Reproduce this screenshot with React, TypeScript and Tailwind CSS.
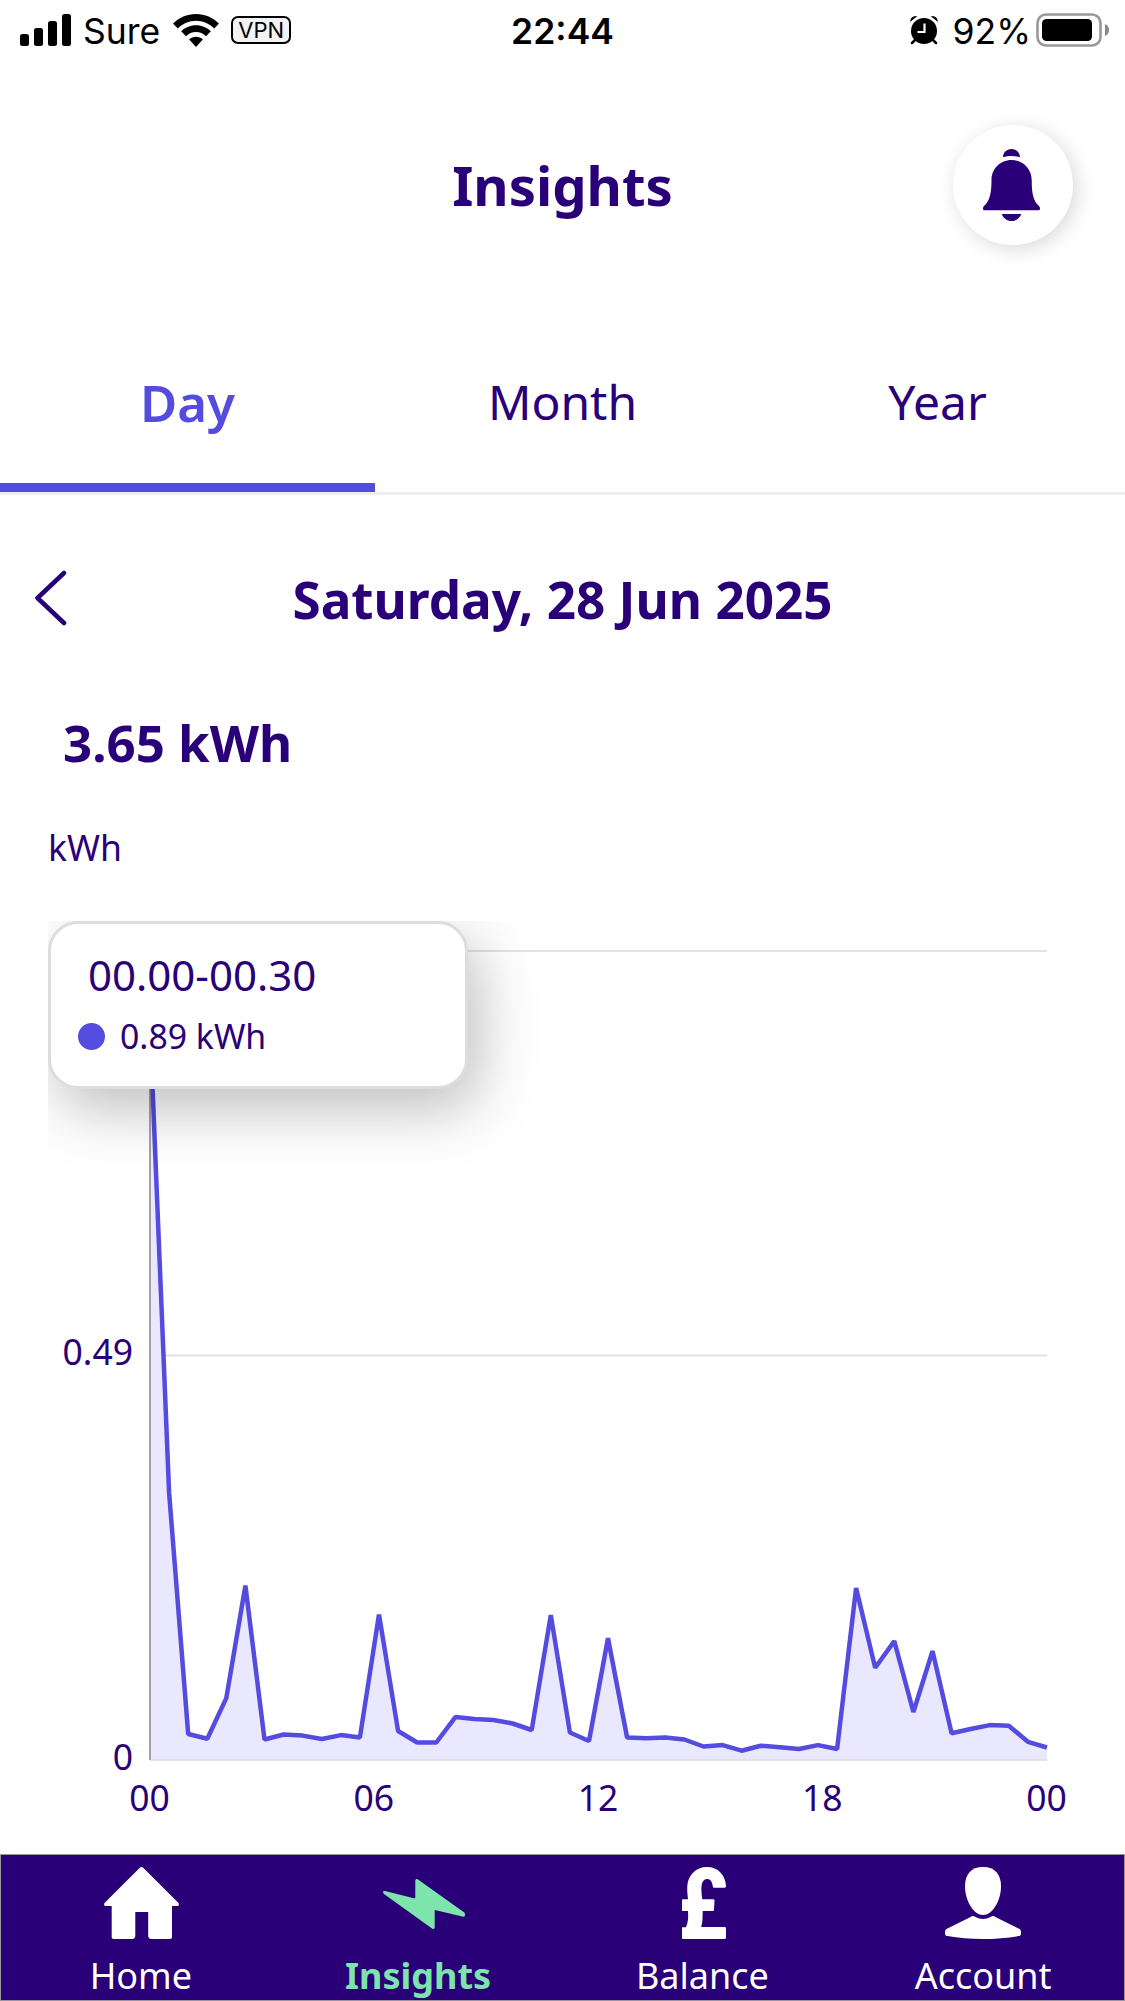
import React, { useState } from "react";

type Tab = "Day" | "Month" | "Year";

type NavItem = {
  label: string;
  icon: React.ReactNode;
  active?: boolean;
};

const TABS: Tab[] = ["Day", "Month", "Year"];

// half-hourly usage in kWh
const READINGS = [
  0.89, 0.3238, 0.0315, 0.0258, 0.075, 0.2113, 0.0248, 0.0309, 0.0296, 0.0254,
  0.0302, 0.0272, 0.1762, 0.0351, 0.0212, 0.0212, 0.052, 0.0496, 0.0484, 0.0442,
  0.0363, 0.1756, 0.0333, 0.023, 0.1476, 0.0272, 0.0263, 0.0272, 0.0248, 0.0163,
  0.0181, 0.0113, 0.0173, 0.0154, 0.0133, 0.0181, 0.0133, 0.2083, 0.1118, 0.144,
  0.0581, 0.1319, 0.0323, 0.0375, 0.0423, 0.0415, 0.0221, 0.0151,
];

const CHART = { left: 102, right: 999, top: 30, bottom: 839, max: 0.98 };

const X_LABELS = ["00", "06", "12", "18", "00"];

function StatusBar() {
  return (
    <div className="grid h-[60px] grid-cols-3 items-start font-['Inter',sans-serif] text-black">
      <div className="flex h-[60px] items-center pl-5">
        <svg width="51" height="32" viewBox="0 0 51 32" className="block">
          <rect x="0" y="20" width="9" height="12" rx="2.5" />
          <rect x="14" y="14" width="9" height="18" rx="2.5" />
          <rect x="28" y="7" width="9" height="25" rx="2.5" />
          <rect x="42" y="0" width="9" height="32" rx="2.5" />
        </svg>
        <span className="ml-3 pt-[3px] text-[35.5px] leading-[60px]">Sure</span>
        <svg
          width="46"
          height="33"
          viewBox="0 0 46 33"
          className="ml-[13px] block"
        >
          <path d="M23 0C14 0 6 3.600 0 9.600l4.800 4.800C9.600 9.600 16 6.700 23 6.700s13.400 2.900 18.200 7.700L46 9.600C40 3.600 32 0 23 0Z" />
          <path d="M23 11.200c-5.800 0-11 2.300-14.900 6.100l4.900 4.900c2.600-2.500 6.100-4.100 10-4.100s7.400 1.600 10 4.100l4.900-4.900c-3.900-3.800-9.100-6.100-14.900-6.100Z" />
          <path d="M23 22.800c-2.600 0-5 1-6.800 2.700L23 33l6.800-7.500c-1.800-1.700-4.200-2.700-6.800-2.700Z" />
        </svg>
        <span className="ml-3 flex h-7 w-[60px] items-center justify-center rounded-[7px] border-2 border-black bg-[#f3f3f3] text-[22px] leading-none">
          VPN
        </span>
      </div>
      <div className="pt-[2px] text-center text-[35.5px] font-semibold leading-[60px]">
        22:44
      </div>
      <div className="flex h-[60px] items-center justify-end pr-[15px]">
        <svg width="28" height="30" viewBox="0 0 28 30" className="block">
          <circle cx="14" cy="16" r="13" />
          <path
            d="M0 7.500C-1 3 3.500-.8 8 1.200L0 7.500ZM28 7.500c1-4.500-3.500-8.300-8-6.300L28 7.500Z"
            stroke="white"
            strokeWidth="1"
          />
          <path
            d="M5 25l-3 3M23 25l3 3"
            stroke="black"
            strokeWidth="2.500"
            strokeLinecap="round"
          />
          <path
            d="M14.500 8.500v8.500H7.500"
            fill="none"
            stroke="white"
            strokeWidth="2.200"
          />
        </svg>
        <span className="ml-[14px] pt-[3px] text-[35.5px] leading-[60px]">
          92%
        </span>
        <svg
          width="74"
          height="34"
          viewBox="0 0 74 34"
          className="ml-[5px] block"
        >
          <rect
            x="1.500"
            y="1.500"
            width="63"
            height="31"
            rx="8.500"
            fill="none"
            stroke="#999"
            strokeWidth="2.600"
          />
          <rect x="6" y="6" width="50" height="22" rx="4.500" />
          <path d="M69 11c2.500 1 4 3.200 4 6s-1.500 5-4 6V11Z" fill="#888" />
        </svg>
      </div>
    </div>
  );
}

function BellIcon() {
  return (
    <svg width="57" height="72" viewBox="0 0 57 72" fill="#290078">
      <path d="M20 8.200C20 3.600 23.700 0 28.500 0S37 3.600 37 8.200C34.500 7.500 31.500 7 28.500 7s-6 .5-8.500 1.200Z" />
      <path d="M28.500 11C17 11 8.500 20 8.500 31c0 12-1.500 21-7.500 26-1.800 1.800-1 4.300.6 4.300h53.800c1.600 0 2.400-2.500.6-4.300-6-5-7.300-14-7.300-26C48.700 20 40 11 28.500 11Z" />
      <path d="M18.700 65h19.600c-1.600 4.300-5.400 7-9.800 7s-8.200-2.700-9.800-7Z" />
    </svg>
  );
}

function HomeIcon() {
  return (
    <svg width="75" height="72" viewBox="0 0 75 72" fill="currentColor">
      <path d="M35.800.8c1-1 2.400-1 3.400 0L74 35.500c1.500 1.500 1.200 3.500-.5 3.500H68v31c0 1.300-.7 2-2 2H47.500c-2 0-3.300-1.300-3.300-3.300V45H31.300v23.700c0 2-1.300 3.300-3.300 3.300H9.700c-1.300 0-2-.7-2-2V39H1.500C-.2 39-.5 37 1 35.500L35.800.8Z" />
    </svg>
  );
}

function BoltIcon() {
  return (
    <svg
      width="82"
      height="50"
      viewBox="0 0 82 50"
      fill="currentColor"
      className="ml-[3px] mt-[2px]"
    >
      <path d="M32.300 18.500V2c0-2 1.200-2.500 2.700-1.500l46.300 33c1.200 1 .9 4.500-.8 4.200L51.700 31v17c0 2-1.200 2.500-2.700 1.400L1 15c-1.800-1.400-1-3.400 1-3l28 7c1.400.3 2.300.3 2.300-.5Z" />
    </svg>
  );
}

function PoundIcon() {
  return (
    <svg
      width="44"
      height="72"
      viewBox="0 0 44 72"
      fill="currentColor"
      className="ml-[3px]"
    >
      <path d="M25 0C36 0 43.500 8 44 19c0 1.200-.4 1.700-1.500 1.700h-10c-1 0-1.500-.5-1.700-1.500C30 14.500 28.300 12 25 12c-3.800 0-5.600 4.200-5.600 10 0 4 .5 7 .9 10.300H31c1.200 0 1.600.5 1.500 1.600l-.5 8.700c0 1-.6 1.500-1.500 1.500H20.700c-.3 6 .3 10.500-1.500 16H42.500c1 0 1.500.5 1.500 1.500v9c0 1-.5 1.400-1.500 1.400H1c-.7 0-1-.3-1-1V61.300c0-.7.300-1 1-1h3C6 56 6.500 51 6 44.100H1c-.7 0-1-.3-1-1v-9.800c0-.7.300-1 1-1h5C5.700 28 5 25 5.300 19 6 8 14 0 25 0Z" />
    </svg>
  );
}

function AccountIcon() {
  return (
    <svg
      width="76"
      height="72"
      viewBox="0 0 76 72"
      fill="currentColor"
      className="mr-[2px]"
    >
      <path d="M38 0c12 0 18 7.500 18 19 0 15.500-9 29-18 29s-18-13.500-18-29C20 7.500 26 0 38 0Z" />
      <path d="M27 49.200c2.800-1 4.500 2.800 11 2.800s8.200-3.800 11-2.800c.8.300 1.600.8 2.400 1.300L74 61.700c1.400.7 2 1.600 2 3.100v1.600c0 1.600-.8 2.400-2.500 2.700C63 71 50 72 38 72S13 71 2.500 69.100C.8 68.800 0 68 0 66.400v-1.600c0-1.500.6-2.400 2-3.100l22.600-11.200c.8-.5 1.600-1 2.400-1.300Z" />
    </svg>
  );
}

const NAV_ITEMS: NavItem[] = [
  { label: "Home", icon: <HomeIcon /> },
  { label: "Insights", icon: <BoltIcon />, active: true },
  { label: "Balance", icon: <PoundIcon /> },
  { label: "Account", icon: <AccountIcon /> },
];

function UsageChart() {
  const { left, right, top, bottom, max } = CHART;
  const step = (right - left) / (READINGS.length - 1);
  const points = READINGS.map((value, index) => {
    const x = left + index * step;
    const y = bottom - (value / max) * (bottom - top);
    return `${x.toFixed(1)},${y.toFixed(1)}`;
  });
  const middle = (top + bottom) / 2;

  return (
    <svg
      width="1077"
      height="933"
      viewBox="0 0 1077 933"
      className="block font-['Noto_Sans',sans-serif] text-[35.5px]"
      fill="#290078"
    >
      <polygon
        points={`${left},${bottom} ${points.join(" ")} ${right},${bottom}`}
        fill="#eae8fe"
      />
      <line
        x1={left + 15}
        x2={right}
        y1={middle}
        y2={middle}
        stroke="#e2e2e4"
        strokeWidth="2"
      />
      {[top, bottom].map((y) => (
        <line
          key={y}
          x1={left}
          x2={right}
          y1={y}
          y2={y}
          stroke="#e2e2e4"
          strokeWidth="2"
        />
      ))}
      <line
        x1={left}
        x2={left}
        y1={top}
        y2={bottom}
        stroke="#a3a2aa"
        strokeWidth="2"
      />
      <polyline
        points={points.join(" ")}
        fill="none"
        stroke="#544bdf"
        strokeWidth="4.500"
        strokeLinejoin="bevel"
      />
      <text x="85" y="444" textAnchor="end">
        0.49
      </text>
      <text x="85" y="849" textAnchor="end">
        0
      </text>
      {X_LABELS.map((label, index) => (
        <text
          key={index}
          x={left - 0.5 + (index * (right - left)) / 4}
          y="890"
          textAnchor="middle"
        >
          {label}
        </text>
      ))}
    </svg>
  );
}

export default function App() {
  const [tab, setTab] = useState<Tab>("Day");

  return (
    <div className="flex h-[2001px] w-[1125px] flex-col overflow-hidden bg-white font-['Noto_Sans',sans-serif] text-[#290078]">
      <StatusBar />

      <header className="grid h-[250px] grid-cols-[1fr_auto_1fr] items-center">
        <h1 className="col-start-2 text-[54.4px] font-bold leading-none">
          Insights
        </h1>
        <button
          type="button"
          className="mr-[52px] flex h-[120px] w-[120px] items-center justify-center justify-self-end rounded-full bg-white pr-[3px] shadow-[4px_4px_20px_rgba(0,0,0,0.15)]"
        >
          <BellIcon />
        </button>
      </header>

      <nav className="grid h-[185px] grid-cols-3 border-b-[3px] border-[#eee]">
        {TABS.map((name) => (
          <button
            key={name}
            type="button"
            onClick={() => setTab(name)}
            className={
              tab === name
                ? "border-b-[9px] border-[#544bdf] pt-[11px] text-[51px] font-semibold text-[#544bdf]"
                : "pt-[2px] text-[48px]"
            }
          >
            {name}
          </button>
        ))}
      </nav>

      <div className="grid h-[208px] grid-cols-[1fr_auto_1fr] items-center">
        <button type="button" className="pb-[2px] pl-[34px]">
          <svg
            width="33"
            height="56"
            viewBox="0 0 33 56"
            fill="none"
            stroke="#290078"
            strokeWidth="4.500"
            strokeLinecap="round"
            strokeLinejoin="round"
          >
            <path d="M30 3L3.500 28 30 53" />
          </svg>
        </button>
        <h2 className="pt-[2px] text-[51.2px] font-bold leading-none">
          Saturday, 28 Jun 2025
        </h2>
      </div>

      <p className="h-[78px] pl-[63px] text-[51px] font-bold leading-[78px]">
        3.65 kWh
      </p>
      <p className="h-[140px] pl-12 text-[35.5px] leading-[132px]">kWh</p>

      <section className="relative ml-12 h-[933px] overflow-hidden">
        <UsageChart />
        <div className="absolute left-0 top-0 flex h-[168px] w-[420px] flex-col rounded-[30px] border-[3px] border-[#ddd] bg-white shadow-[10px_20px_60px_rgba(0,0,0,0.26)]">
          <p className="mt-[21px] pl-[37px] text-[42px] leading-[60px]">
            00.00-00.30
          </p>
          <p className="flex items-center pl-[27px] text-[33.8px] leading-[62px]">
            <span className="mr-[15px] h-[27px] w-[27px] rounded-full bg-[#544bdf]" />
            0.89 kWh
          </p>
        </div>
      </section>

      <footer className="grid h-[147px] shrink-0 grid-cols-4 border border-[#999] bg-[#290078]">
        {NAV_ITEMS.map((item) => (
          <a
            key={item.label}
            className={
              item.active
                ? "flex flex-col items-center text-[36px] font-bold text-[#7de5ac]"
                : "flex flex-col items-center text-[36px] text-white"
            }
          >
            <span className="flex h-[96px] items-center">{item.icon}</span>
            <span
              className={
                item.active ? "pr-[8px] leading-[50px]" : "pr-[1px] leading-[50px]"
              }
            >
              {item.label}
            </span>
          </a>
        ))}
      </footer>
    </div>
  );
}
